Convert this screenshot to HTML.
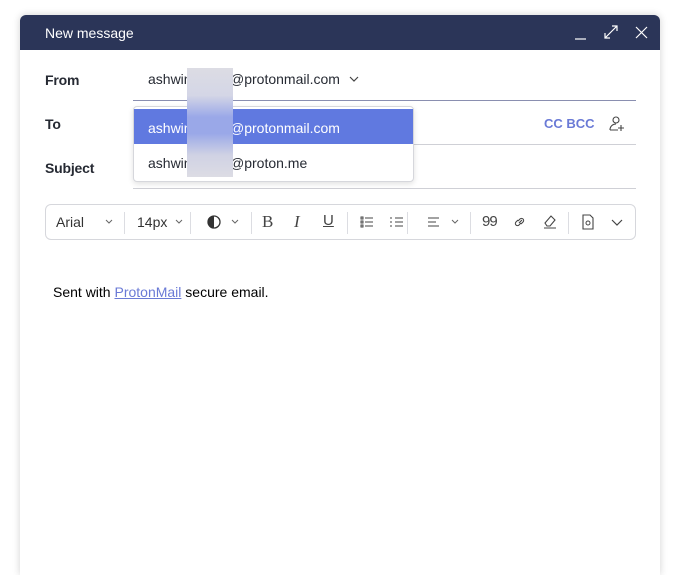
<!DOCTYPE html>
<html><head><meta charset="utf-8"><style>
*{margin:0;padding:0;box-sizing:border-box}
body{width:675px;height:569px;background:#fff;position:relative;overflow:hidden;font-family:"Liberation Sans",sans-serif}
.win{position:absolute;left:20px;top:15px;width:640px;height:560px;background:#fff;border-radius:6px 6px 0 0;box-shadow:0 0 8px rgba(0,0,0,.18)}
.hdr{position:absolute;left:0;top:0;width:640px;height:35px;background:#2b3558;border-radius:6px 6px 0 0;color:#fff;font-size:14px}
.hdr .t{position:absolute;left:25px;top:10px}
.a{position:absolute}
.lbl{position:absolute;left:45px;font-size:14px;color:#262a33;font-weight:bold;letter-spacing:-.2px}
.line{position:absolute;left:133px;width:503px;height:1px;background:#cfd0d6}
.txt{position:absolute;font-size:14px;color:#262a33}
.tb{position:absolute;left:45px;top:204px;width:591px;height:36px;border:1px solid #d6d7dc;border-radius:6px}
.sep{position:absolute;top:7px;width:1px;height:22px;background:#dcdde2}
svg{position:absolute}
</style></head><body>
<div class="win"></div>
<div class="hdr a" style="left:20px;top:15px"><span class="t">New message</span>
<svg style="left:553px;top:10px" width="16" height="16"><path d="M2 14h11" stroke="#fff" stroke-width="1.2"/></svg>
<svg style="left:583px;top:9px" width="16" height="16"><path d="M2 14L14 2M9 2h5v5M2 9v5h5" stroke="#fff" stroke-width="1.2" fill="none"/></svg>
<svg style="left:614px;top:10px" width="16" height="16"><path d="M2 2l11 11M13 2L2 13" stroke="#fff" stroke-width="1.2"/></svg>
</div>
<div class="lbl" style="top:72px">From</div>
<div class="lbl" style="top:116px">To</div>
<div class="lbl" style="top:160px">Subject</div>
<div class="txt" style="left:148px;top:71px">ashwin</div>
<div class="txt" style="left:230px;top:71px">@protonmail.com</div>
<svg style="left:348px;top:73px" width="12" height="12"><path d="M2 4l4 4 4-4" stroke="#444" fill="none" stroke-width="1.2"/></svg>
<div class="line" style="top:100px;background:#8a8fb0"></div>
<div class="line" style="top:144px"></div>
<div class="line" style="top:188px"></div>
<div class="a" style="left:544px;top:116px;font-size:13px;font-weight:bold;color:#6a7ad6">CC BCC</div>
<svg style="left:608px;top:115px" width="18" height="18"><circle cx="8" cy="5" r="3" stroke="#444" fill="none" stroke-width="1.1"/><path d="M2 15c0-4 3-6 6-6M2 15h8M13 10v6M10 13h6" stroke="#444" fill="none" stroke-width="1.1"/></svg>
<div class="a" style="left:133px;top:106px;width:281px;height:76px;background:#fff;border:1px solid #d6d7dc;border-radius:4px;box-shadow:0 2px 6px rgba(0,0,0,.12)"></div>
<div class="a" style="left:134px;top:109px;width:279px;height:35px;background:#6079e0"></div>
<div class="txt" style="left:148px;top:120px;color:#fff">ashwin</div>
<div class="txt" style="left:230px;top:120px;color:#fff">@protonmail.com</div>
<div class="txt" style="left:148px;top:155px">ashwin</div>
<div class="txt" style="left:230px;top:155px">@proton.me</div>
<div class="a" style="left:187px;top:68px;width:46px;height:109px;background:linear-gradient(#dcdce4 0%,#d4d6e6 25%,#9aa8e8 45%,#9aa8e8 60%,#d0d2e4 80%,#dcdce4 100%)"></div>
<div class="tb">
<div class="sep" style="left:78px"></div><div class="sep" style="left:144px"></div><div class="sep" style="left:205px"></div><div class="sep" style="left:301px"></div><div class="sep" style="left:361px"></div><div class="sep" style="left:424px"></div><div class="sep" style="left:522px"></div>
</div>
<div class="txt" style="left:56px;top:214px;color:#333">Arial</div>
<div class="txt" style="left:137px;top:214px;color:#333">14px</div>
<svg style="left:103px;top:216px" width="12" height="12"><path d="M3 4l3 3 3-3" stroke="#666" fill="none"/></svg>
<svg style="left:173px;top:216px" width="12" height="12"><path d="M3 4l3 3 3-3" stroke="#666" fill="none"/></svg>
<svg style="left:229px;top:216px" width="12" height="12"><path d="M3 4l3 3 3-3" stroke="#666" fill="none"/></svg>
<svg style="left:449px;top:216px" width="12" height="12"><path d="M3 4l3 3 3-3" stroke="#666" fill="none"/></svg>
<svg style="left:610px;top:215px" width="14" height="14"><path d="M2 5l5 5 5-5" stroke="#444" fill="none" stroke-width="1.2"/></svg>
<svg style="left:206px;top:214px" width="16" height="16"><circle cx="8" cy="8" r="6" stroke="#333" fill="none" stroke-width="1.3"/><path d="M8 2a6 6 0 0 0 0 12z" fill="#333"/></svg>
<div class="a" style="left:262px;top:212px;font-size:17px;font-family:'Liberation Serif',serif;color:#444">B</div>
<div class="a" style="left:294px;top:212px;font-size:17px;font-family:'Liberation Serif',serif;font-style:italic;color:#444">I</div>
<div class="a" style="left:323px;top:212px;font-size:15px;text-decoration:underline;color:#444">U</div>
<svg style="left:359px;top:214px" width="16" height="16"><path d="M2 3h2v2H2zM2 7h2v2H2zM2 11h2v2H2zM6 4h8M6 8h8M6 12h8" stroke="#444" fill="none" stroke-width="1"/></svg>
<svg style="left:389px;top:214px" width="16" height="16"><path d="M6 4h8M6 8h8M6 12h8M2 3v2M2 7v2M2 11v2" stroke="#444" fill="none" stroke-width="1"/></svg>
<svg style="left:426px;top:214px" width="16" height="16"><path d="M2 4h11M2 8h8M2 12h11" stroke="#444" fill="none" stroke-width="1.1"/></svg>
<div class="a" style="left:482px;top:213px;font-size:15px;color:#444;letter-spacing:-1px">99</div>
<svg style="left:512px;top:214px" width="16" height="16"><path d="M7 9l3-3M6 6L4 8a2 2 0 0 0 3 3l2-2M9 10l2-2a2 2 0 0 0-3-3L6 7" stroke="#444" fill="none" stroke-width="1.1"/></svg>
<svg style="left:542px;top:213px" width="16" height="16"><path d="M3 10l6-7 4 4-5 6H5zM2 15h12" stroke="#444" fill="none" stroke-width="1.1"/></svg>
<svg style="left:580px;top:214px" width="16" height="16"><path d="M3 1h7l3 3v11H3z" stroke="#444" fill="none" stroke-width="1.1"/><circle cx="8" cy="9" r="2" stroke="#444" fill="none"/></svg>
<div class="a" style="left:53px;top:284px;font-size:14px;color:#000">Sent with <span style="color:#6a7ad6;text-decoration:underline">ProtonMail</span> secure email.</div>
</body></html>
